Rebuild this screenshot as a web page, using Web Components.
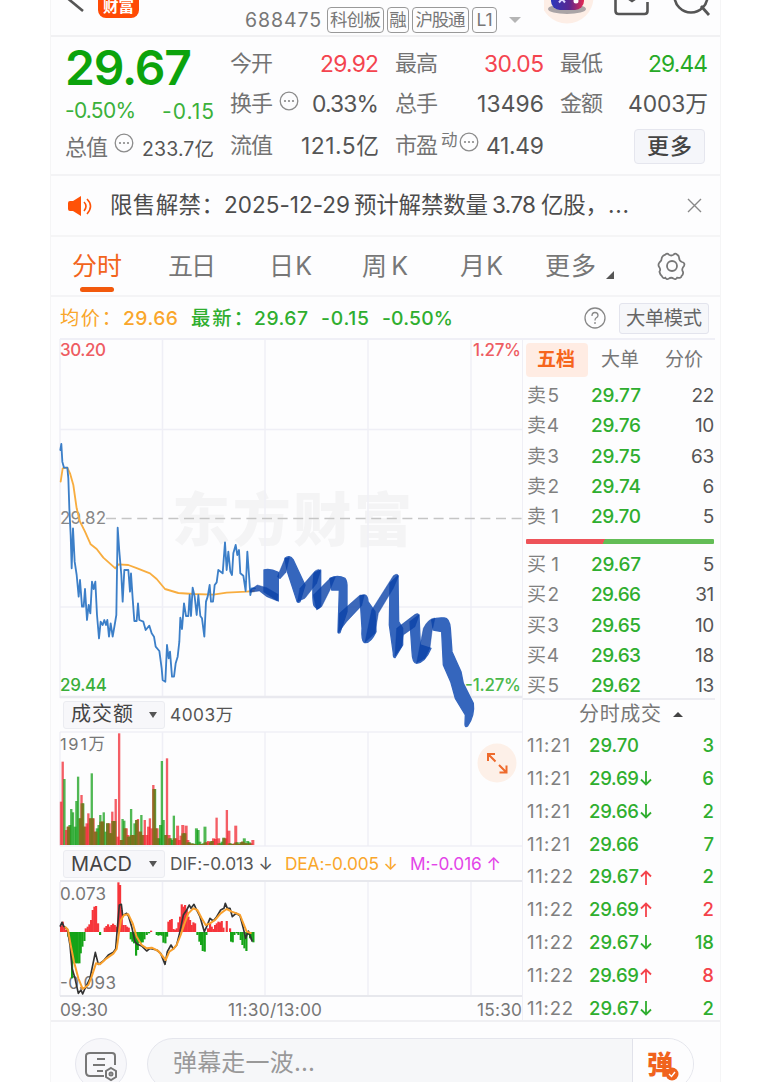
<!DOCTYPE html>
<html lang="zh-CN">
<head>
<meta charset="utf-8">
<title>688475</title>
<style>
html,body{margin:0;background:#fff}
body{width:768px;height:1082px;overflow:hidden;font-family:Inter,"Noto Sans CJK SC",sans-serif;line-height:1.25;color:#555}
</style>
</head>
<body>
<stock-app></stock-app>
<script>
const make=(name,html,setup)=>{
  const t=document.createElement('template');
  t.innerHTML=html;
  customElements.define(name,class extends HTMLElement{
    connectedCallback(){
      if(this.shadowRoot)return;
      this.attachShadow({mode:'open'}).append(t.content.cloneNode(true));
      if(setup)setup(this,this.shadowRoot);
    }
  });
};

make('stock-app',`<style>
:host{display:block;box-sizing:border-box;width:671px;height:1082px;margin-left:50px;background:#fdfdfe;border-left:1px solid #f5f5f6;border-right:1px solid #f5f5f6;overflow:hidden}
.main{display:grid;grid-template-columns:462px 193px;padding-left:9px;height:682px;border-bottom:2px solid #f0f0f3}
.side{border-left:1px solid #efeff5;height:682px}
</style>
<app-head></app-head><quote-panel></quote-panel><notice-bar></notice-bar><period-tabs></period-tabs><summary-bar></summary-bar>
<div class="main"><div><price-chart></price-chart><volume-chart></volume-chart><macd-chart></macd-chart></div>
<div class="side"><order-book></order-book><trade-list></trade-list></div></div>
<chat-bar></chat-bar>`);

make('app-head',`<style>
:host{display:flex;height:37px;border-bottom:2px solid #f1f1f3;position:relative;color:#777;box-sizing:border-box}
.l{width:194px;display:flex}.l svg{display:block}
.logo{box-sizing:border-box;width:41px;height:40px;margin:-22px 0 0 12px;padding-top:20px;border-radius:8px;background:#ff4a05;color:#fff;font:bold 15.5px/15px "Noto Sans CJK SC",sans-serif;text-align:center}
.m{display:flex;align-items:center;height:40px;gap:4px;font-size:19.5px}
.tag{box-sizing:border-box;border:1.5px solid #999;border-radius:4px;height:26px;line-height:23px;font-size:17.5px;text-align:center;color:#777}
.caret{border:6px solid transparent;border-top:6px solid #b5b5b5;border-bottom:0;margin-left:8px}
.r{margin-left:auto;width:176px}
.r svg{display:block}
</style>
<div class="l"><svg width="35" height="35" viewBox="51 0 35 35"><path d="M66-3 83 11" stroke="#555" stroke-width="2.6" fill="none"/></svg><div class="logo">财富</div></div>
<div class="m"><fit-t w="76">688475</fit-t><span class="tag" style="width:57px;margin-left:2px"><fit-t w="51">科创板</fit-t></span><span class="tag" style="width:22px;margin-left:-1px">融</span><span class="tag" style="width:57px;margin-left:-1px"><fit-t w="50">沪股通</fit-t></span><span class="tag" style="width:25px;margin-left:-1px;">L1</span><span class="caret"></span></div>
<div class="r"><svg width="176" height="35" viewBox="544 0 176 35">
<circle cx="567" cy="-3" r="26.5" fill="#fdeee6"/>
<ellipse cx="567" cy="9" rx="19" ry="5" fill="#aaa4a6"/><defs><linearGradient id="g"><stop offset="0" stop-color="#2b39bc"/><stop offset=".55" stop-color="#5a2690"/><stop offset="1" stop-color="#e52850"/></linearGradient></defs>
<rect x="551" y="-12" width="33" height="22" rx="9" fill="url(#g)"/><path d="m559 2.500 3-3.500 3 3.500" stroke="#dcd6ff" stroke-width="2" fill="none"/><circle cx="576" cy="1" r="2.500" fill="#fff"/>
<path d="M615.5 0v11q0 3 3 3h26q3 0 3-3V2M629-1l3 2 3-2" fill="none" stroke="#555" stroke-width="2.6"/>
<circle cx="691" cy="-4" r="16.5" fill="none" stroke="#555" stroke-width="2.6"/><path d="m701 6 8 9" stroke="#555" stroke-width="2.8"/></svg></div>`);

const dots='<svg width="20" height="20" viewBox="0 0 20 20" style="display:block"><circle cx="10" cy="10" r="8.8" fill="none" stroke="#8c8c8c" stroke-width="1.3"/><circle cx="6" cy="10" r="1.1" fill="#888"/><circle cx="10" cy="10" r="1.1" fill="#888"/><circle cx="14" cy="10" r="1.1" fill="#888"/></svg>';
make('quote-panel',`<style>
:host{display:grid;grid-template-columns:149px 149px 149px 148px;column-gap:16px;padding:7px 0 0 14px;height:139px;box-sizing:border-box;border-bottom:2px solid #f3f3f5;color:#555;font-size:22.8px;--r:#f4444f;--g:#27aa27}
.row{display:flex;align-items:center;justify-content:space-between;height:40px;white-space:nowrap}
.lab{color:#737373;font-size:22px}.d{align-self:flex-start;margin:7px auto 0 6px}
.price{height:48px;font-size:48px;line-height:47px;font-weight:600;color:#0ca30c}
.btn{margin:0 3px 0 auto;box-sizing:border-box;width:71px;height:35px;border:1px solid #e5e6ee;background:#f5f6fa;border-radius:4px;text-align:center;line-height:33px;color:#444;font-size:22px;font-weight:500}
</style>
<div><div class="price"><fit-t w="127">29.67</fit-t></div>
<div class="row" style="height:38px;font-size:21px;color:#3bb13b"><fit-t w="71">-0.50%</fit-t><fit-t w="52" style="margin-top:2px">-0.15</fit-t></div>
<div class="row" style="height:36px;font-size:19.5px"><fit-t class="lab" w="43">总值</fit-t><span class="d" style="margin-top:3px">${dots}</span><fit-t w="72" style="margin-top:2px">233.7亿</fit-t></div></div>
<div><div class="row"><fit-t class="lab" w="43">今开</fit-t><fit-t w="59" style="color:var(--r)">29.92</fit-t></div>
<div class="row"><fit-t class="lab" w="43">换手</fit-t><span class="d">${dots}</span><fit-t w="67">0.33%</fit-t></div>
<div class="row" style="height:44px"><fit-t class="lab" w="43">流值</fit-t><fit-t w="78">121.5亿</fit-t></div></div>
<div><div class="row"><fit-t class="lab" w="43">最高</fit-t><fit-t w="60" style="color:var(--r)">30.05</fit-t></div>
<div class="row"><fit-t class="lab" w="43">总手</fit-t><fit-t w="67">13496</fit-t></div>
<div class="row" style="height:44px"><fit-t class="lab" w="43">市盈</fit-t><span style="font-size:16.5px;align-self:flex-start;margin:6px 0 0 3px;color:#777">动</span><span class="d" style="margin:8px auto 0 1px">${dots}</span><fit-t w="58">41.49</fit-t></div></div>
<div><div class="row"><fit-t class="lab" w="43">最低</fit-t><fit-t w="60" style="color:var(--g)">29.44</fit-t></div>
<div class="row"><fit-t class="lab" w="43">金额</fit-t><fit-t w="80">4003万</fit-t></div>
<div class="row" style="height:44px"><div class="btn"><fit-t w="45">更多</fit-t></div></div></div>`);

make('notice-bar',`<style>
:host{display:flex;align-items:center;height:61px;box-sizing:border-box;border-bottom:2px solid #f5f5f6;padding:0 18px 0 17px;color:#4c4c4c;font-size:22.5px;white-space:nowrap}
.t{margin-left:18px;display:flex;flex:1}
</style>
<svg width="24" height="20" viewBox="68 195 24 20"><path d="M68 202q0-2 2-2h3l8-5v20l-8-5h-3q-2 0-2-2z" fill="#ff5207"/><path d="M84 201q4 4 0 9M87 198q7 7 0 15" fill="none" stroke="#ff5207" stroke-width="1.6"/></svg>
<div class="t"><fit-t w="114">限售解禁：</fit-t><fit-t w="126">2025-12-29</fit-t><fit-t w="134" style="margin-left:4px">预计解禁数量</fit-t><fit-t w="44" style="margin-left:4px">3.78</fit-t><fit-t w="67" style="margin-left:5px">亿股，</fit-t><fit-t w="21">...</fit-t></div>
<svg width="15" height="15" viewBox="0 0 15 15"><path d="m1 1 13 13M14 1 1 14" stroke="#888" stroke-width="1.4"/></svg>`);

make('period-tabs',`<style>
:host{display:flex;height:60px;box-sizing:border-box;border-bottom:2px solid #f4f4f6;padding-left:21px;font-size:25px;color:#777;line-height:58px;white-space:nowrap}
.on{color:#f2641c;width:96px}.on i{display:block;width:34px;height:5px;border-radius:3px;background:#f2590c;margin:-8px 0 0 8px}
.c{width:0;height:0;border-left:8px solid transparent;border-bottom:8px solid #555;margin:34px 0 0 10px}
svg{margin:14px 0 0 43px}
</style>
<div class="on"><fit-t w="50">分时</fit-t><i></i></div><fit-t w="48">五日</fit-t><fit-t w="43" style="margin-left:53px">日K</fit-t><fit-t w="46" style="margin-left:50px">周K</fit-t><fit-t w="43" style="margin-left:52px">月K</fit-t><fit-t w="51" style="margin-left:42px">更多</fit-t><span class="c"></span>
<svg width="30" height="30" viewBox="0 0 30 30" fill="none" stroke="#777" stroke-width="1.8"><path d="M9 3q2-2 3.500 0 2.500 1.800 5 0 1.500-2 3.500 0 2 1 2 3 0 3.500 3 4.500 2.500.5 2.500 2.500 0 1.500-1.500 3-1.500 2.500 0 4.500.7 2.500-1.500 4.500 0 2-4.500 1.500-1.500 2.500-3.500 1-2.500-1.800-5 0-2 1.500-3.500-1Q7 28 5.500 25 3.500 23 3 20.500q1.500-2 0-4.500Q1 13.500 3 11q2.500-2 2.500-5Q6 4 9 3z" transform="translate(-.5 .7) scale(.98)"/><circle cx="15" cy="15" r="5"/></svg>`);

make('summary-bar',`<style>
:host{display:flex;align-items:center;height:41px;box-sizing:border-box;padding:1px 11px 0 9px;font-size:19.3px;color:#2fae2f;font-weight:500;white-space:nowrap}
.btn{box-sizing:border-box;width:90px;height:31px;border:1px solid #e3e4ed;background:#f6f7fa;border-radius:3px;text-align:center;color:#666;line-height:29px;margin-left:13px;font-weight:400}
svg{margin-left:auto}
</style>
<fit-t w="61" style="color:#f9a62b;font-weight:400">均价：</fit-t><fit-t w="55" style="color:#f9a62b;margin-left:2px">29.66</fit-t>
<fit-t w="62" style="margin-left:13px">最新：</fit-t><fit-t w="54" style="margin-left:1px">29.67</fit-t><fit-t w="48" style="margin-left:13px">-0.15</fit-t><fit-t w="71" style="margin-left:13px">-0.50%</fit-t>
<svg width="22" height="22" viewBox="0 0 22 22" fill="none" stroke="#888" stroke-width="1.3"><circle cx="11" cy="11" r="10"/><path d="M8 9q0-3.500 3-3.500t3 3q0 1.500-2 2.500-1 .7-1 2.500M11 15v2"/></svg><div class="btn"><fit-t w="76">大单模式</fit-t></div>`);

const svgCss=':host{display:block}svg{display:block;overflow:visible}text{font-family:Inter,"Noto Sans CJK SC",sans-serif}';
const headCss='.h{display:flex;align-items:center;height:33px;font-size:17.3px;white-space:nowrap;color:#555}.sel{display:flex;align-items:center;justify-content:space-between;box-sizing:border-box;width:102px;height:28px;margin-left:3px;background:#f7f7fa;border:1px solid #ebecf1;border-radius:3px;padding:0 7px;color:#444;font-size:20px}.sel i{border:4px solid transparent;border-top:6px solid #555;border-bottom:0}';
make('price-chart',`<style>${svgCss}:host{position:relative;z-index:2}</style>
<svg width="462" height="360" viewBox="60 338 462 360">
<text x="172" y="541" font-size="58" font-weight="900" fill="#f4f4f5" textLength="240" style="font-family:'Noto Sans CJK SC'">东方财富</text>
<g stroke="#efeff6" stroke-width="1.500" fill="none"><path d="M60 339v359M162.500 340v357M265 340v357M368 340v357M471 340v357M60 429.500h462M60 607h462"/><path d="M60 339h655" stroke-width="2"/><path d="M60 697h462" stroke="#e9e9ef" stroke-width="2.500"/></g>
<path d="M106 518.500h416" stroke="#c5c5c5" stroke-width="1.500" stroke-dasharray="10 5.600"/>
<g font-size="17" font-weight="500"><text x="60" y="356" fill="#ee5c62" textLength="46">30.20</text><text x="60" y="524" fill="#888" font-weight="400" textLength="46">29.82</text><text x="60" y="691" fill="#3aae3a" textLength="47">29.44</text><text x="473" y="356" fill="#ee5c62" textLength="48">1.27%</text><text x="465" y="691" fill="#4bb84b" textLength="56">-1.27%</text></g>
<g transform="translate(50 335) scale(.33333)" fill="none" stroke-linejoin="round" stroke-linecap="round">
<path stroke="#f8ad3f" stroke-width="5.500" d="M32 440 38 400 52 398 60 415 70 450 80 520 90 560 105 590 122 628 140 642 160 668 196 700 205 688 235 690 262 700 300 715 320 732 345 762 385 774 430 777 490 779 530 773 590 770 612 768"/>
<path stroke="#3c7fc8" stroke-width="5.500" d="M31 345 34 327 37 380 42 398 52 398 55 430 58 520 62 600 65 700 69 580 74 680 80 720 86 785 90 735 96 815 101 815 105 762 111 855 116 810 121 835 126 740 131 762 136 740 141 840 147 910 152 860 158 870 163 855 168 870 172 855 177 905 182 865 188 905 194 870 199 840 203 578 208 650 214 720 218 800 223 705 235 705 240 770 243 715 248 790 253 858 260 858 264 805 268 855 280 860 287 885 298 872 305 895 312 905 317 935 328 948 335 1000 338 1035 346 1040 351 930 356 970 360 950 366 1025 372 1025 377 985 383 965 388 920 391 848 396 882 402 805 408 843 415 843 419 780 423 843 428 758 434 785 440 840 445 780 451 843 456 850 463 905 468 800 473 785 479 750 483 800 489 800 494 750 500 742 505 705 518 715 525 622 530 705 535 650 541 710 546 720 550 655 557 630 562 660 567 645 571 715 580 722 587 768 592 650 597 720 601 780 605 760 615 760"/></g>
<g transform="translate(250 335) scale(.33333)" stroke-linejoin="round">
<g fill="#3566bd" stroke="#3566bd" stroke-width="4"><path d="M42 705Q60 700 85 712V798L42 770z"/><path d="M105 670Q118 658 130 675L165 750 150 800Q142 805 140 795L112 710z"/><path d="M192 715 212 705V810Q205 830 192 812 185 790 192 715"/><path d="M240 730Q262 718 285 730 292 738 291 760V830L270 893Q264 896 264 890L268 765H245z"/><path d="M330 785Q352 770 354 800L375 830 378 890Q360 928 342 922 334 915 336 880z"/><path d="M420 745 444 722 446 860 458 880V930L435 968Q429 968 430 955L418 870z"/><path d="M480 860 507 840 511 930 543 940Q525 983 500 985 487 983 486 950z"/><path d="M545 855Q560 847 583 849 598 850 601 880L606 950 633 1010 640 1045 670 1105Q675 1140 653 1173 645 1178 645 1168L646 1140 616 1090 602 1040 580 990 575 890 550 885z"/></g>
<g fill="#0b42a8" fill-opacity=".8" stroke="#0b42a8" stroke-opacity=".4" stroke-width="3"><path d="M0 765 22 750 50 758 84 778 82 798 50 785 28 768 0 772z"/><path d="M82 725 105 670 118 668 108 712 90 732z"/><path d="M142 800 150 760 195 708Q210 698 211 710L200 745 165 790z"/><path d="M200 825 190 780 240 730 256 726 240 765 215 815z"/><path d="M265 893 268 835 330 780 343 780 335 812 290 860z"/><path d="M345 922 365 825 430 722Q445 712 445 725L430 760 385 835 375 895z"/><path d="M435 963 440 880 495 838Q507 832 507 842L495 875 460 900 455 935z"/><path d="M500 983 520 880Q535 850 555 849L546 890 540 938 525 970z"/></g></g>
</svg>`);

make('volume-chart',`<style>${svgCss}${headCss}
.c{position:relative}.ex{position:absolute;right:5px;top:12px}</style>
<div class="h"><div class="sel"><fit-t w="62">成交额</fit-t><i></i></div><fit-t w="63" style="margin-left:5px">4003万</fit-t></div>
<div class="c"><svg width="462" height="116" viewBox="60 731 462 116"><g stroke="#efeff6" stroke-width="1.500"><path d="M60 732h462M60 732v114M162.500 732v114M265 732v114M368 732v114M471 732v114M60 846h462"/></g>
<g class="b" transform="translate(50 695) scale(.33333)"></g><text x="60" y="750" font-size="16.500" fill="#777" textLength="45">191万</text></svg>
<svg class="ex" width="40" height="40" viewBox="0 0 40 40"><circle cx="20" cy="20" r="19.500" fill="#fdf0e8"/><path d="m11 11 7.500 7.500M11 18v-7h7M22 22l7.500 7.500M22.500 29.500h7v-7" fill="none" stroke="#ee6a2b" stroke-width="2"/></svg></div>`,
(h,r)=>{
 const v='130r 250r 198g 45r 55r 60g 108g 98g 55g 132g 205g 80g 150r 125g 55r 65r 95r 80r 215g 80r 40r 50g 60g 90g 70r 98g 40g 65g 65r 35g 100r 72g 138r 25r 335r 15r 78g 73g 50r 30r 25g 108g 30r 65g 75g 78r 40r 90g 30r 75r 30r 55r 80r 50r 180r 168g 50r 20g 60g 252g 75g 30g 260r 30r 20g 15g 88g 20r 58r 15r 28r 60r 35g 58r 15r 8g 4r 5g 3r 50g 45g 10g 3r 5g 55g 8r 12r 8r 12g 20r 18r 82r 20r 5g 10g 22g 20r 105r 43r 5g 3g 5r 58r 8g 3r 8g 10r 20g 5r 12g 8g 5r 15r'.split(' ');
 const q=v.map(s=>[parseInt(s),s.endsWith('r')]);
 const bar=(x,w,n,c,o)=>'<rect x="'+x+'" y="'+(450-n)+'" width="'+w+'" height="'+n+'" fill="'+c+'" fill-opacity="'+o+'"/>';
 let out='';
 q.forEach(([n,red],i)=>{out+=bar(29.5+5.13*i,n>70?7:9,n,red?'#f0202a':'#0c9c12',.72);});
 q.forEach(([n,red],i)=>{
  const next=q[i+1];
  if(next&&next[1]!==red&&i>2)out+=bar(30+5.13*i,10,Math.min(n,next[0]),'#7d701c',.85);
 });
 r.querySelector('.b').innerHTML=out;
});

make('macd-chart',`<style>${svgCss}${headCss}.h{height:34px}.ax{display:grid;grid-template-columns:1fr auto 1fr;height:25px;align-items:center;font-size:17.300px;color:#777}.ax :last-child{justify-self:end}</style>
<div class="h"><div class="sel"><fit-t w="61">MACD</fit-t><i></i></div><fit-t w="103" style="margin-left:5px">DIF:-0.013 ↓</fit-t><fit-t w="113" style="margin-left:12px;color:#f9a62b">DEA:-0.005 ↓</fit-t><fit-t w="91" style="margin-left:12px;color:#e344e8">M:-0.016 ↑</fit-t></div>
<svg width="462" height="116" viewBox="60 881 462 116"><g stroke="#efeff6" stroke-width="1.500"><path d="M60 882v114M162.500 882v114M265 882v114M368 882v114M471 882v114"/><path d="M60 881h462M60 996h462" stroke="#e7e8ed" stroke-width="2"/></g>
<g fill="#777" font-size="17"><text x="60" y="900" textLength="46">0.073</text><text x="60" y="989" textLength="56">-0.093</text></g>
<g transform="translate(50 845) scale(.33333)" fill="none" stroke-linejoin="round"><g class="b"></g>
<path stroke="#333" stroke-width="5" d="M30 245 36 232 42 245 52 252 60 300 66 370 75 400 85 445 93 435 98 447 103 435 120 400 136 322 145 358 160 348 175 330 190 322 197 312 202 250 208 180 214 178 218 212 230 205 236 215 245 245 255 290 262 298 275 303 290 318 300 310 320 315 332 325 345 358 352 320 363 300 370 312 380 300 390 260 400 210 410 195 418 180 423 190 432 178 440 195 450 215 463 260 470 245 480 220 490 228 500 215 512 195 522 190 526 175 532 190 540 190 547 215 558 205 570 212 580 250 587 280 595 258 607 290"/>
<path stroke="#f9a02c" stroke-width="6" d="M45 245 54 255 62 300 72 350 85 400 98 432 115 420 125 395 138 355 150 358 170 340 190 326 200 312 206 270 213 225 222 210 235 208 248 235 260 275 275 300 290 310 305 308 325 318 347 345 358 320 370 312 380 300 392 270 402 240 415 205 430 190 442 195 455 220 467 240 480 235 495 225 512 205 530 192 545 200 560 205 570 210 580 235 590 260 605 265"/></g></svg>
<div class="ax"><fit-t w="48">09:30</fit-t><fit-t w="94" style="margin-left:-32px">11:30/13:00</fit-t><fit-t w="45">15:30</fit-t></div>`,
(h,r)=>{
 const p='33,242 38,230 43,248 48,255 55,275 60,300 66,400 72,355 78,355 83,355 88,355 92,325 97,305 103,288 107,250 113,245 118,238 123,225 128,195 133,185 138,183 144,235 150,270 164,248 169,243 174,238 179,245 184,240 189,236 194,240 199,245 205,112 210,120 215,195 220,240 226,240 231,245 236,248 242,283 247,290 252,295 258,332 263,315 268,293 273,293 278,292 283,283 290,270 297,265 303,257 320,270 325,272 330,270 335,272 340,293 346,295 351,275 355,230 360,225 365,222 370,252 375,254 380,250 385,232 390,215 395,178 400,185 405,180 410,195 415,215 420,225 425,240 430,232 435,235 442,270 448,290 453,300 458,318 464,320 469,270 474,250 480,235 485,245 490,252 495,240 500,235 505,230 510,232 515,228 520,248 530,228 540,250 543,290 548,292 553,270 560,265 565,270 572,285 577,300 583,310 589,318 595,270 600,280 605,285 610,292';
 r.querySelector('.b').innerHTML=p.split(' ').map(s=>{const[x,y]=s.split(',').map(Number);return '<rect x="'+(x-3)+'" y="'+Math.min(y,261)+'" width="6.500" height="'+Math.abs(y-261)+'" fill="'+(y<261?'#f6353b':'#14a317')+'"/>';}).join('');
});

make('order-book',`<style>
:host{display:block;height:362px;padding:5px 1px 0 3px;box-sizing:border-box;border-bottom:2px solid #ececf1;font-size:19px;color:#555}
.tabs{display:flex;height:34px;line-height:33px;color:#777;margin-bottom:4px}
.on{width:62px;background:#ffece3;border-radius:4px;color:#f6651c;font-weight:bold;margin-right:13px;padding-left:11px;box-sizing:border-box}
.row{display:grid;grid-template-columns:64px 60px 1fr;height:30.2px;align-items:center;padding-left:1px}
.k{color:#808080}.p{color:#2fae2f;font-weight:500}.n{justify-self:end;letter-spacing:-.3px}
.bar{height:5px;margin:7px 0 6px;background:linear-gradient(115deg,#ee5359 41.500%,#63bd56 41.500%);border-radius:1px}
</style><div class="tabs"><span class="on"><fit-t w="38">五档</fit-t></span><fit-t w="38">大单</fit-t><fit-t w="38" style="margin-left:26px">分价</fit-t></div><div class="s"></div><div class="bar"></div><div class="y"></div>`,
(h,r)=>{
 const row=(k,a)=>a.map(([n,p,q])=>'<div class="row"><fit-t class="k" w="32">'+k+' '+n+'</fit-t><fit-t class="p" w="50">'+p+'</fit-t><span class="n">'+q+'</span></div>').join('');
 r.querySelector('.s').innerHTML=row('卖',[[5,'29.77',22],[4,'29.76',10],[3,'29.75',63],[2,'29.74',6],[1,'29.70',5]]);
 r.querySelector('.y').innerHTML=row('买',[[1,'29.67',5],[2,'29.66',31],[3,'29.65',10],[4,'29.63',18],[5,'29.62',13]]);
});

make('trade-list',`<style>
:host{display:block;padding:0 1px 0 4px;font-size:18.500px;color:#2fae2f}
.h{display:flex;align-items:center;height:29px;color:#777;padding-left:52px;font-size:20px}
.h i{border:5px solid transparent;border-bottom:5px solid #444;border-top:0;margin-left:12px}
.row{display:grid;grid-template-columns:62px 64px 1fr;height:32.9px;align-items:center}
.t{color:#808080}.p{display:flex;align-items:center;font-weight:500}.n{justify-self:end;font-weight:500}.u{color:#f4434b}
svg{display:block;margin-left:1px}
</style><div class="h"><fit-t w="82">分时成交</fit-t><i></i></div><div class="b"></div>`,
(h,r)=>{
 const d=[['11:21','29.70','',3],['11:21','29.69','d',6],['11:21','29.66','d',2],['11:21','29.66','',7],['11:22','29.67','u',2],['11:22','29.69','u',2,1],['11:22','29.67','d',18],['11:22','29.69','u',8,1],['11:22','29.67','d',2]];
 r.querySelector('.b').innerHTML=d.map(([t,p,a,n,u])=>'<div class="row"><fit-t class="t" w="'+(t=='11:21'?43:46)+'">'+t+'</fit-t><span class="p"><fit-t w="50">'+p+'</fit-t>'+(a?'<svg class="'+a+'" width="12" height="15" viewBox="0 0 12 15" fill="none" stroke="currentColor" stroke-width="1.800"><path d="'+(a=='u'?'M6 15V1.500M1 6.500l5-5 5 5':'M6 0v13.500M1 8.500l5 5 5-5')+'"/></svg>':'')+'</span><span class="n '+(u?'u':'')+'">'+n+'</span></div>').join('');
});

make('chat-bar',`<style>
:host{display:flex;height:62px;padding:16px 0 0 24px;box-sizing:border-box}
.i{box-sizing:border-box;width:52px;height:52px;border:1px solid #e6e7ee;border-radius:50%;background:#f7f7fa;padding:11px 0 0 8px;flex:none}
.f{box-sizing:border-box;display:flex;margin-left:20px;width:547px;height:52px;border:1px solid #e5e6ed;border-radius:26px;background:#f6f7f9;overflow:hidden;flex:none}
.t{flex:1;padding-left:25px;line-height:48px;font-size:24px;color:#999}
.d{width:61px;background:#fdfdfe;border-left:1px solid #e1e2ea;position:relative;box-sizing:border-box;color:#f0631e;font:900 26px/47px "Noto Sans CJK SC",sans-serif;padding-left:14px}
.d svg{position:absolute;left:32px;top:28px}
</style><div class="i"><svg width="36" height="32" viewBox="0 0 36 32" fill="none" stroke="#777" stroke-width="2"><path d="M20 26H6q-4 0-4-4V6q0-3 4-3h22q3 0 3 3v9M13 9h8M9 15h12M13 21h6"/><path d="m27 18 5 3v6l-5 3-5-3v-6z"/><circle cx="27" cy="24" r="1.500"/></svg></div>
<div class="f"><div class="t"><fit-t w="142">弹幕走一波...</fit-t></div><div class="d">弹<svg width="14" height="14" viewBox="0 0 14 14"><circle cx="7" cy="7" r="6.500" fill="#f0631e"/><path d="m4 7 2.500 2.500L10 5" fill="none" stroke="#fff" stroke-width="1.400"/></svg></div></div>`);

/* A run of text whose tracking is adjusted so that it fills the width in its "w" attribute. */
customElements.define('fit-t',class extends HTMLElement{
  connectedCallback(){
    if(this.shadowRoot)return;
    const s=this.attachShadow({mode:'open'});
    s.innerHTML='<style>:host{display:inline-block;white-space:nowrap;flex:none;text-align:left}span{display:inline-block}</style><span><slot></slot></span>';
    const w=+this.getAttribute('w'),el=s.querySelector('span'),n=[...this.textContent].length;
    const nat=el.getBoundingClientRect().width;
    this.style.width=w+'px';
    el.style.letterSpacing=((w-nat)/Math.max(1,n-1)).toFixed(3)+'px';
  }
});
</script>
</body>
</html>
